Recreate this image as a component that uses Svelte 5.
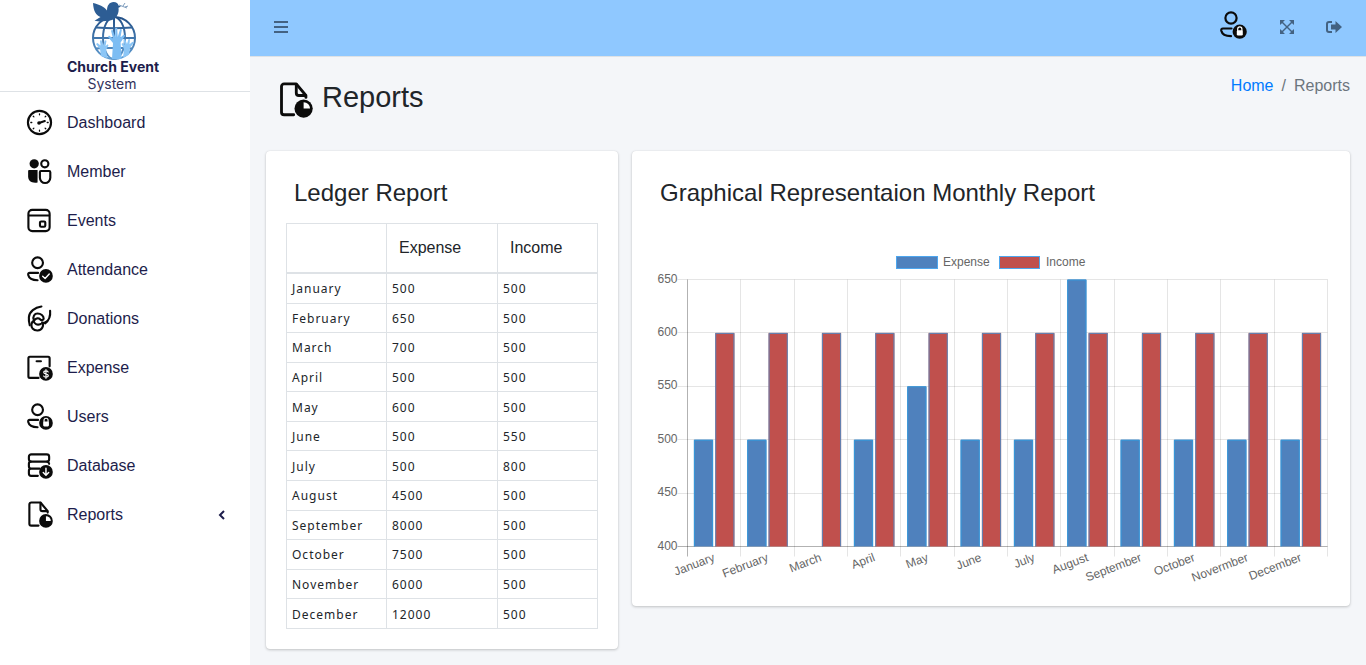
<script>
	const menu = [
		{ label: 'Dashboard', icon: 'gauge' },
		{ label: 'Member', icon: 'members' },
		{ label: 'Events', icon: 'events' },
		{ label: 'Attendance', icon: 'attendance' },
		{ label: 'Donations', icon: 'donations' },
		{ label: 'Expense', icon: 'expense' },
		{ label: 'Users', icon: 'userLock' },
		{ label: 'Database', icon: 'database' },
		{ label: 'Reports', icon: 'report', children: true }
	];

	const ledger = [
		['January', 500, 500],
		['February', 650, 500],
		['March', 700, 500],
		['April', 500, 500],
		['May', 600, 500],
		['June', 500, 550],
		['July', 500, 800],
		['August', 4500, 500],
		['September', 8000, 500],
		['October', 7500, 500],
		['November', 6000, 500],
		['December', 12000, 500]
	];

	const monthly = [
		{ label: 'January', expense: 500, income: 600 },
		{ label: 'February', expense: 500, income: 600 },
		{ label: 'March', expense: 400, income: 600 },
		{ label: 'April', expense: 500, income: 600 },
		{ label: 'May', expense: 550, income: 600 },
		{ label: 'June', expense: 500, income: 600 },
		{ label: 'July', expense: 500, income: 600 },
		{ label: 'August', expense: 650, income: 600 },
		{ label: 'September', expense: 500, income: 600 },
		{ label: 'October', expense: 500, income: 600 },
		{ label: 'Novermber', expense: 500, income: 600 },
		{ label: 'December', expense: 500, income: 600 }
	];

	const ticks = [400, 450, 500, 550, 600, 650];
	const min = 400;
	const max = 650;

	// the chart is redrawn to the width of its card, at 2:1
	let chartWidth = $state(678);
	let chartHeight = $derived(Math.round(chartWidth / 2));

	const left = 35.5;
	const top = 32.5;
	let right = $derived(chartWidth - 2.5);
	let bottom = $derived(chartHeight - 39.5);
	let step = $derived((right - left) / monthly.length);
	let barWidth = $derived(step * 0.36);
	let middle = $derived(Math.round(chartWidth / 2));

	const snap = (v) => Math.floor(v) + 0.5;
	let y = $derived((value) => bottom - ((value - min) / (max - min)) * (bottom - top));

	// open at the bottom, where the bar stands on the axis
	let outline = $derived((x, value) => {
		const l = x + 0.5;
		const r = x + barWidth - 0.5;
		return `M${l} ${bottom}V${y(value) + 0.5}H${r}V${bottom}`;
	});
</script>

{#snippet icon(name)}
	<svg class="icon" viewBox="0 0 28 28" fill="none" stroke="#0b0b0b" stroke-width="2.2" stroke-linecap="round" stroke-linejoin="round" aria-hidden="true">
		{#if name === 'gauge'}
			<circle cx="14" cy="14" r="12" />
			<path d="M14 5v1M14 22v1M5 14h1M22 14h1M7.500 7.500l.7.7M20.500 7.500l-.7.7M7.500 20.500l.7-.7M20.500 20.500l-.7-.7" stroke-width="1.300" />
			<path d="M13.500 14.500l6-2" stroke-width="2.200" />
			<circle cx="13.500" cy="14.500" r=".8" fill="#0b0b0b" />
		{:else if name === 'members'}
			<circle cx="8.500" cy="6" r="4.800" fill="#0b0b0b" stroke="none" />
			<circle cx="19.500" cy="6" r="3.700" />
			<path d="M3.500 12.500H12v13c-6.500 1-9.800-1.800-9.800-6.500V14c0-1 .4-1.500 1.300-1.500z" fill="#0b0b0b" stroke="none" />
			<path d="M15.500 13.500H24q1.200 0 1.200 1.200v5.800a5.400 5.400 0 0 1-10.800 0v-5.800q0-1.200 1.100-1.200z" />
		{:else if name === 'events'}
			<rect x="2.500" y="3" width="22" height="22" rx="4" />
			<path d="M3 8.800h21" />
			<rect x="14.500" y="15" width="5.500" height="5.500" rx="1.200" />
		{:else if name === 'attendance' || name === 'userLock'}
			<circle cx="12" cy="7" r="5.600" />
			<path d="M12.500 17.500H4c-1.400 0-2 .8-1.700 2.300.8 3.400 4.300 5.400 9.700 5.400" />
			<circle cx="20.700" cy="20.700" r="7.100" fill="#0b0b0b" stroke="none" />
			{#if name === 'attendance'}
				<path d="M17.300 21l2.500 2.300 4.300-4.600" stroke="#fff" stroke-width="1.500" />
			{:else}
				<rect x="17.800" y="19.200" width="6" height="5.200" rx="1.200" fill="#fff" stroke="none" />
				<path d="M18.700 19.500v-1.600a2.100 2.100 0 0 1 4.200 0v1.600" stroke="#fff" stroke-width="1.200" />
			{/if}
		{:else if name === 'donations'}
			<path d="M16 1.500C9 2.500 3.500 7 3 12.500c-.3 2.700.2 5.500.9 8.500M25 6c.6 5.500-.7 9.500-5.200 13" />
			<path d="M8.200 15.500c-1.600-3.500.6-6.700 3.800-6.700 3.500 0 6.300 2.400 6.300 5.200 0 1.800-2.300 2.300-3.700.8-1.500-1.600-4.400-1.200-5.400.6" />
			<path d="M8 16.300c-2.600 1.600-3.200 5.500-1.200 8 2.600 3 8.200 3 10.200-.9 1-2 .8-4-.3-5.400 1.600.8 3.300.4 4.300-.8M8 16.300c.2 3.200 3.600 5 7.200 3.400" />
		{:else if name === 'expense'}
			<path d="M13 24.800H4a1.500 1.500 0 0 1-1.500-1.500v-19A1.500 1.500 0 0 1 4 2.800h19a1.500 1.500 0 0 1 1.500 1.500v8.500" />
			<path d="M11 7.500h4.500" />
			<circle cx="20.700" cy="20.700" r="7.100" fill="#0b0b0b" stroke="none" />
			<path d="M23 18.600c-.5-.8-1.300-1.100-2.300-1.100-1.400 0-2.300.6-2.300 1.600 0 2.300 4.700 1 4.700 3.300 0 1-1 1.600-2.400 1.600-1 0-2-.4-2.400-1.200M20.700 16.200v9" stroke="#fff" stroke-width="1.200" />
		{:else if name === 'database'}
			<rect x="3" y="2.500" width="21" height="7.500" rx="2.500" />
			<path d="M5 10c-1.300.2-2 1-2 2.200v2.600c0 1.300 1 2.400 2.300 2.400H14M22 10c1.300.4 2 1 2 2.300M5 17.200c-1.300.2-2 1-2 2.200v2.900c0 1.300 1 2.400 2.300 2.400h7" />
			<circle cx="20.700" cy="20.700" r="7.100" fill="#0b0b0b" stroke="none" />
			<path d="M20.700 16.800v7M17.900 21.300l2.800 2.800 2.800-2.800" stroke="#fff" stroke-width="1.500" />
		{:else if name === 'report'}
			<path d="M13 25.500H5.500A2 2 0 0 1 3.500 23.500V3.500A2 2 0 0 1 5.500 1.500h9.500l7.500 9v1.500" />
			<path d="M15 2v6.500a2 2 0 0 0 2 2h5" />
			<circle cx="20.700" cy="20.700" r="7.100" fill="#0b0b0b" stroke="none" />
			<path d="M20.700 20.700v-5a5 5 0 0 1 5 5z" fill="#fff" stroke="none" />
		{/if}
	</svg>
{/snippet}

<div class="wrapper">
	<aside class="sidebar">
		<a class="brand" href="#home">
			<svg width="110" height="91" viewBox="0 0 110 91" role="img" aria-label="Church Event System">
				<defs>
					<linearGradient id="globe" x1="0" y1="0" x2="0" y2="1">
						<stop offset="0" stop-color="#235087" />
						<stop offset="1" stop-color="#5f9bd0" />
					</linearGradient>
				</defs>
				<g fill="none" stroke="url(#globe)" stroke-width="2">
					<circle cx="56" cy="38" r="21" />
					<ellipse cx="56" cy="38" rx="11" ry="21" />
					<path d="M56 17l.1 42M38 27.500q18 1.500 36 0M35 38l42 .1M38 48.500q18-1.500 36 0" />
				</g>
				<path fill="#2d5d94" d="M35 3c6 1.500 11 3.500 14 7.500 0-5 2.500-8.500 6.500-8.500 3 0 4.500 1.500 5 3.500l2.500 1-2.500 1.200c.8 5-1.500 10.300-6.500 12.300-4 1.500-8.500.8-12.500 1.500l-5-.8 6-3.700c-4.500-2-7-5.500-7.500-14z" />
				<path fill="none" stroke="#7d9cbd" stroke-width="1" d="M61 5l8 3M65 6l2-3M67 7l3-1" />
				<path fill="#7dbdf3" d="M54 59l1-16-5-6 1-1.500 4 3-2-8 1.700-.5 2.500 7v-9h2l.5 9 2.500-8 1.700.5-1.500 8 3.500-3 1.200 1.300-4.500 6.700 1 16.500z" />
				<path fill="#8cc6f6" d="M43 56l-1-7-4-5 1.500-1 3 2.500-.5-5 1.500-.2 1.500 5 2-5 1.500.4-1 5.500 2-2 1 1-2.500 5 1.500 8zM65 58l1-9-2.500-5 1-1 2 2-1-5.500 1.500-.4 2 5 1.500-5 1.500.2-.5 5 3-2.500 1.500 1-4 5-1 7z" />
				<text class="logo-name" x="55" y="72" text-anchor="middle">Church Event</text>
				<text class="logo-sub" x="54" y="89" text-anchor="middle">System</text>
			</svg>
		</a>
		<nav class="menu" aria-label="Main">
			{#each menu as item}
				<a href="#{item.label.toLowerCase()}" class="menu-item">
					{@render icon(item.icon)}
					<span>{item.label}</span>
					{#if item.children}
						<svg class="caret" viewBox="0 0 8 12" aria-hidden="true"><path d="M6 2L2 6l4 4" fill="none" stroke="#1d1d4b" stroke-width="2" /></svg>
					{/if}
				</a>
			{/each}
		</nav>
	</aside>

	<div class="page">
		<header class="navbar">
			<button class="nav-btn" aria-label="Toggle menu">
				<svg width="14" height="14" viewBox="0 0 14 14"><path d="M0 2h14M0 7h14M0 12h14" stroke="currentColor" stroke-width="2" /></svg>
			</button>
			<div class="nav-right">
				<button class="nav-btn user" aria-label="Account">{@render icon('userLock')}</button>
				<button class="nav-btn" aria-label="Fullscreen">
					<svg width="14" height="14" viewBox="0 0 14 14" fill="currentColor">
						<path d="M0 0h5L3.400 1.600 3.200 2.200 7 6l3.800-3.800-.2-.6L9 0h5v5l-1.600-1.600-.6-.2L8 7l3.800 3.800.6-.2L14 9v5H9l1.600-1.600.2-.6L7 8l-3.800 3.800.2.6L5 14H0V9l1.600 1.600.6.2L6 7 2.200 3.200l-.6.2L0 5z" />
					</svg>
				</button>
				<button class="nav-btn" aria-label="Log out">
					<svg width="16" height="14" viewBox="0 0 16 14" fill="currentColor">
						<path d="M6 1v2H3a1 1 0 0 0-1 1v6a1 1 0 0 0 1 1h3v2H3a3 3 0 0 1-3-3V4a3 3 0 0 1 3-3z" />
						<path d="M9.500 1L16 7l-6.500 6V9.500H5v-5h4.500z" />
					</svg>
				</button>
			</div>
		</header>

		<main>
			<div class="content-header">
				<h1>{@render icon('report')}Reports</h1>
				<nav class="breadcrumb" aria-label="Breadcrumb">
					<a href="#home">Home</a>
					<span>/</span>
					<span>Reports</span>
				</nav>
			</div>

			<div class="row">
				<div class="col">
					<section class="card">
						<h2>Ledger Report</h2>
						<table>
							<thead>
								<tr>
									<th class="month"></th>
									<th class="expense">Expense</th>
									<th>Income</th>
								</tr>
							</thead>
							<tbody>
								{#each ledger as [month, expense, income]}
									<tr>
										<td>{month}</td>
										<td>{expense}</td>
										<td>{income}</td>
									</tr>
								{/each}
							</tbody>
						</table>
					</section>
				</div>

				<div class="col">
					<section class="card">
						<h2>Graphical Representaion Monthly Report</h2>
						<div class="chart" bind:clientWidth={chartWidth}>
							<svg width={chartWidth} height={chartHeight} role="img" aria-label="Expense and income by month">
								<!-- legend -->
								<rect class="bar-expense key" x={middle - 94.5} y="9.5" width="41" height="12" />
								<text x={middle - 48} y="19">Expense</text>
								<rect class="bar-income key" x={middle + 8.5} y="9.5" width="40" height="12" />
								<text x={middle + 55} y="19">Income</text>

								<!-- grid -->
								{#each ticks as tick}
									<path class="grid" class:axis={tick === min} d="M{left - 10} {snap(y(tick))}H{right}" />
									<text x={left - 10} y={y(tick) + 3} text-anchor="end">{tick}</text>
								{/each}
								{#each { length: monthly.length + 1 } as _, i}
									<path class="grid" class:axis={i === 0} d="M{snap(left + i * step)} {top}V{bottom + 10}" />
								{/each}

								<!-- bars -->
								{#each monthly as m, i}
									{@const x = left + i * step + step * 0.12}
									{@const x2 = x + step * 0.4}
									{#if m.expense > min}
										<rect class="bar-expense" {x} y={y(m.expense)} width={barWidth} height={bottom - y(m.expense)} />
										<path class="outline-expense" d={outline(x, m.expense)} />
									{/if}
									<rect class="bar-income" x={x2} y={y(m.income)} width={barWidth} height={bottom - y(m.income)} />
									<path class="outline-income" d={outline(x2, m.income)} />
									<text text-anchor="end" transform="translate({left + (i + 0.5) * step + 1.5} {bottom + 14}) rotate(-21)">{m.label}</text>
								{/each}
							</svg>
						</div>
					</section>
				</div>
			</div>
		</main>
	</div>
</div>

<style>
	:global(body) {
		background: #f4f6f9;
		color: #212529;
		font-family: 'Liberation Sans', Arial, sans-serif;
		font-size: 16px;
		line-height: 24px;
	}

	a {
		text-decoration: none;
	}

	h1,
	h2 {
		margin: 0;
		font-weight: 400;
	}

	.wrapper {
		display: flex;
		min-height: 100vh;
	}

	.sidebar {
		flex: 0 0 250px;
		background: #fff;
	}

	.brand {
		display: flex;
		justify-content: center;
		padding-right: 24px;
		border-bottom: 1px solid #dee2e6;
	}

	.brand svg {
		overflow: visible;
	}

	.logo-name {
		font-family: Inter, sans-serif;
		font-size: 14px;
		font-weight: 700;
		fill: #1d1d4b;
	}

	.logo-sub {
		font-family: Inter, sans-serif;
		font-size: 14px;
		fill: #33335c;
	}

	.menu {
		padding-top: 6px;
	}

	.menu-item {
		display: flex;
		align-items: center;
		gap: 14px;
		height: 49px;
		padding: 0 24px 0 26px;
		color: #1d1d4b;
	}

	.icon {
		flex: none;
		width: 28px;
		height: 28px;
	}

	.menu .icon {
		width: 27px;
		height: 27px;
	}

	.caret {
		width: 8px;
		height: 12px;
		margin-left: auto;
	}

	.page {
		flex: 1;
		min-width: 0;
	}

	.navbar {
		display: flex;
		align-items: center;
		justify-content: space-between;
		height: 54px;
		padding: 0 24px 2px;
		background: #8fc8ff;
		border-bottom: 1px solid #dee2e6;
	}

	.nav-btn {
		display: flex;
		padding: 0;
		border: 0;
		background: none;
		color: #436282;
		cursor: pointer;
	}

	.nav-right {
		display: flex;
		align-items: center;
		gap: 32px;
	}

	.user {
		padding: 0 1px 4px 0;
	}

	.content-header {
		display: flex;
		align-items: flex-start;
		justify-content: space-between;
		padding: 17px 16px 31px 27px;
	}

	h1 {
		display: flex;
		align-items: center;
		gap: 9px;
		font-size: 29px;
		line-height: 46px;
	}

	h1 .icon {
		width: 36px;
		height: 36px;
		padding-top: 6px;
	}

	.breadcrumb {
		display: flex;
		gap: 8px;
		color: #6c757d;
	}

	.breadcrumb a {
		color: #007bff;
	}

	.row {
		display: grid;
		grid-template-columns: 1fr 2fr;
		align-items: start;
		padding: 0 9px 15px;
	}

	.col {
		min-width: 0;
		padding: 0 7px;
	}

	.card {
		padding: 20px;
		background: #fff;
		border-radius: 4px;
		box-shadow:
			0 0 1px rgba(0, 0, 0, 0.13),
			0 1px 3px rgba(0, 0, 0, 0.2);
	}

	h2 {
		padding: 7px 8px 16px;
		font-size: 24px;
		line-height: 29px;
	}

	table {
		width: 100%;
		height: 406px;
		border-collapse: collapse;
		table-layout: fixed;
	}

	th,
	td {
		border: 1px solid #dee2e6;
		text-align: left;
	}

	th {
		height: 24px;
		padding: 12px;
		border-bottom-width: 2px;
		font-weight: 400;
	}

	.month {
		width: 75px;
	}

	.expense {
		width: 86px;
	}

	td {
		padding: 5px 5px 4px;
		font-family: 'Noto Sans', 'Segoe UI', sans-serif;
		font-size: 12px;
		line-height: 19px;
		letter-spacing: 1px;
	}

	.chart {
		margin-top: 24px;
	}

	.chart svg {
		display: block;
	}

	.chart text {
		font-size: 12px;
		fill: #666;
	}

	.grid {
		stroke: rgba(0, 0, 0, 0.1);
	}

	.grid.axis {
		stroke: rgba(0, 0, 0, 0.3);
	}

	.bar-expense {
		fill: #4f81bd;
	}

	.bar-income {
		fill: #c0504d;
	}

	.key {
		stroke: #4da6ee;
	}

	.outline-expense {
		fill: none;
		stroke: #3498db;
	}

	.outline-income {
		fill: none;
		stroke: #5b86ba;
	}
</style>
